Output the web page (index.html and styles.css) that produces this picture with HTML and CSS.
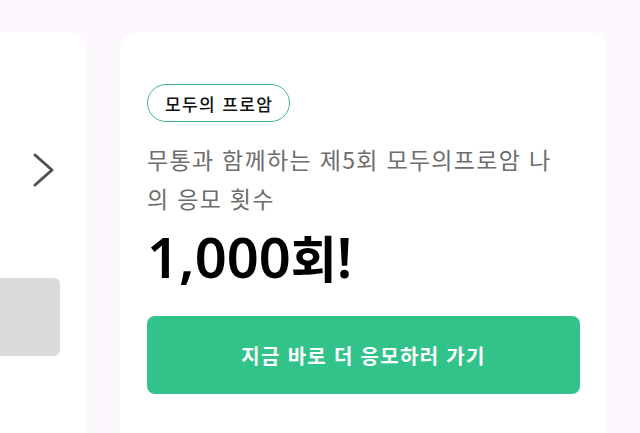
FILE: index.html
```html
<!DOCTYPE html>
<html lang="ko">
<head>
<meta charset="utf-8">
<link rel="stylesheet" href="styles.css">
</head>
<body>
<div class="track">
  <div class="card card-prev">
    <svg class="chev" width="24" height="36" viewBox="0 0 24 36"><path d="M3 3 L20 18 L3 33" fill="none" stroke="#505050" stroke-width="3" stroke-linecap="round" stroke-linejoin="round"/></svg>
    <div class="thumb"></div>
  </div>
  <div class="card card-main">
    <span class="badge">모두의 프로암</span>
    <p class="title">무통과 함께하는 제5회 모두의프로암 나의 응모 횟수</p>
    <p class="count">1,000<span class="unit">회</span>!</p>
    <button class="cta">지금 바로 더 응모하러 가기</button>
  </div>
</div>
</body>
</html>
```
FILE: styles.css
```css
html, body {
  margin: 0;
  padding: 0;
  background: #fdf8fd;
  font-family: "Noto Sans CJK KR", "Noto Sans", sans-serif;
  overflow: hidden;
}
.track {
  display: flex;
  gap: 33px;
  padding-top: 32px;
  height: 433px;
  box-sizing: border-box;
}
.card {
  background: #fff;
  border-radius: 18px 18px 0 0;
}
.card-prev {
  width: 87px;
  border-radius: 0 18px 0 0;
  display: flex;
  flex-direction: column;
  align-items: flex-start;
}
.chev {
  margin: 120px 0 0 32px;
}
.thumb {
  margin-top: 90px;
  width: 60px;
  height: 78px;
  background: #dcdadc;
  border-radius: 0 6px 6px 0;
}
.card-main {
  width: 487px;
  padding: 52px 27px 0 27px;
  box-sizing: border-box;
  display: flex;
  flex-direction: column;
  align-items: flex-start;
}
.badge {
  height: 38px;
  box-sizing: border-box;
  border: 1.5px solid #45b48e;
  border-radius: 19px;
  padding: 0 16px 0 17px;
  font-size: 17px;
  font-weight: 500;
  letter-spacing: 1.4px;
  color: #111;
  display: flex;
  align-items: center;
}
.title {
  margin: 18px 0 0;
  width: 418px;
  font-size: 23px;
  line-height: 39px;
  letter-spacing: 1.3px;
  color: #6d6d6d;
}
.count {
  margin: 8px 0 0;
  font-family: "Noto Sans", "Noto Sans CJK KR", sans-serif;
  font-size: 56px;
  font-weight: 600;
  line-height: 60px;
  color: #000;
}
.unit {
  font-family: "Noto Sans CJK KR", sans-serif;
  font-size: 50px;
  font-weight: 700;
}
.cta {
  margin-top: 30px;
  width: 433px;
  height: 78px;
  border: none;
  border-radius: 8px;
  background: #32c38a;
  color: #fff;
  font-family: inherit;
  font-size: 20px;
  font-weight: 700;
  letter-spacing: 1.3px;
}
```
